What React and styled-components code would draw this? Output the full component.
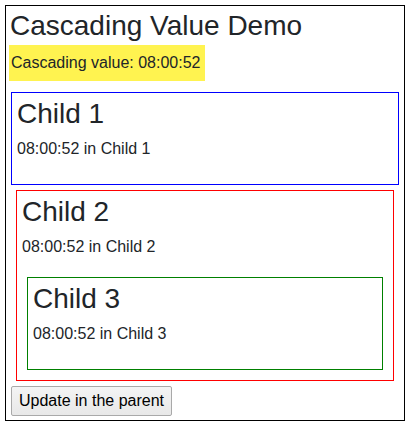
import React, { useState } from 'react';
import styled, { createGlobalStyle } from 'styled-components';

const GlobalStyle = createGlobalStyle`
  body {
    margin: 5px;
    background: #fff;
    font-family: "Liberation Sans", Arial, sans-serif;
    color: #212529;
  }
`;

const Frame = styled.div`
  width: 400px;
  box-sizing: border-box;
  border: 1px solid #000;
`;

const Title = styled.h1`
  font-size: 28px;
  font-weight: 400;
  line-height: 32px;
  margin: 4px 0 3px 4px;
`;

const Highlight = styled.div`
  width: fit-content;
  margin-left: 3px;
  padding: 9px 5px 9px 2px;
  background: #fff350;
  font-size: 16px;
  line-height: 18px;
`;

const ChildBox = styled.div`
  border: 1px solid ${(p) => p.$color};
  padding: 5px;
  margin: ${(p) => p.$margin};
`;

const ChildTitle = styled.h2`
  font-size: 28px;
  font-weight: 400;
  line-height: 32px;
  margin: 0 0 9px;
`;

const ChildText = styled.p`
  font-size: 16px;
  line-height: 19px;
  margin: 0 0 21px;
`;

const Button = styled.button`
  display: block;
  margin: 5px 0 4px 5px;
  padding: 5px 7px;
  font-family: "Liberation Sans", Arial, sans-serif;
  font-size: 16px;
  line-height: 18px;
  color: #000;
  background: linear-gradient(#f4f4f4, #e8e8e8);
  border: 1px solid #a9a9a9;
  border-radius: 2px;
`;

const Child = ({ name, value, color, margin, children }) => (
  <ChildBox $color={color} $margin={margin}>
    <ChildTitle>{name}</ChildTitle>
    <ChildText>
      {value} in {name}
    </ChildText>
    {children}
  </ChildBox>
);

export default function App() {
  const [value] = useState('08:00:52');

  return (
    <>
      <GlobalStyle />
      <Frame>
        <Title>Cascading Value Demo</Title>
        <Highlight>Cascading value: {value}</Highlight>
        <Child name="Child 1" value={value} color="#0000ff" margin="11px 5px 5px" />
        <Child name="Child 2" value={value} color="#ff0000" margin="5px 10px">
          <Child name="Child 3" value={value} color="#008000" margin="5px" />
        </Child>
        <Button>Update in the parent</Button>
      </Frame>
    </>
  );
}
